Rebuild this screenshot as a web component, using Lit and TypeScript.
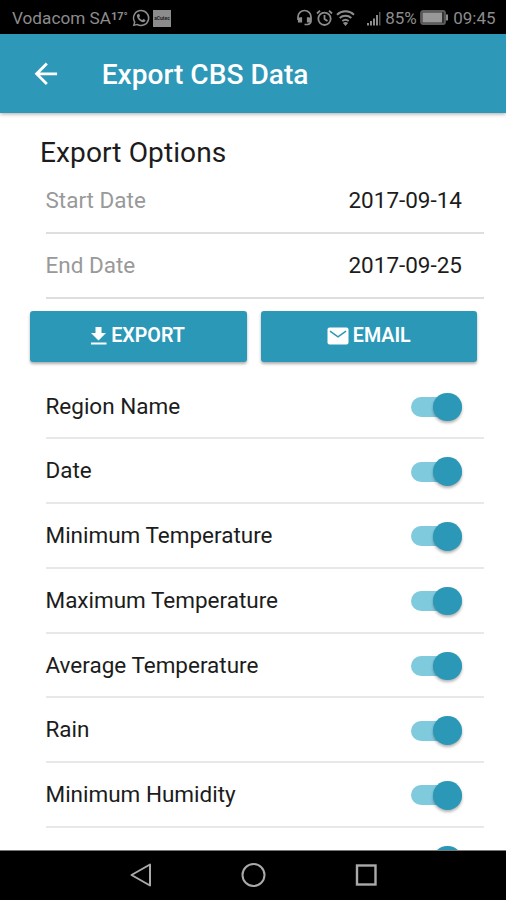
import { LitElement, html, css } from "lit";
import { customElement, property } from "lit/decorators.js";

@customElement("option-toggle")
class OptionToggle extends LitElement {
  @property() label = "";

  static styles = css`
    :host {
      display: flex;
      box-sizing: border-box;
      height: 64.75px;
      margin-left: 45.5px;
      margin-right: 22px;
      padding-right: 22.5px;
      align-items: center;
      justify-content: space-between;
      border-bottom: 2px solid #e8e8e8;
      flex: none;
    }
    .label { line-height: 30px; margin-top: -0.4px; }
    .track {
      width: 51px;
      height: 20px;
      border-radius: 10px;
      background: #80cade;
      display: flex;
      align-items: center;
      justify-content: flex-end;
      margin-top: 2px;
    }
    .knob {
      width: 28.4px;
      height: 28.4px;
      flex: none;
      border-radius: 50%;
      background: #2b98b7;
      box-shadow: 0 2px 3px rgba(0, 0, 0, 0.3);
    }
  `;

  render() {
    return html`<span class="label">${this.label}</span>
      <span class="track"><span class="knob"></span></span>`;
  }
}

@customElement("app-root")
class AppRoot extends LitElement {
  static styles = css`
    :host {
      display: flex;
      flex-direction: column;
      height: 900px;
      overflow: hidden;
      background: #fff;
      color: #1c1c1c;
      font-family: Roboto, "Noto Sans", sans-serif;
      font-size: 22.49px;
    }
    svg { display: block; flex: none; }
    .status {
      height: 34px;
      flex: none;
      box-sizing: border-box;
      background: #000;
      color: #8c8c8c;
      display: flex;
      align-items: center;
      padding: 2px 10.5px 0 12px;
      font-size: 17px;
      line-height: 20px;
      white-space: nowrap;
    }
    .carrier { width: 99px; font-size: 17.2px; }
    .temp { width: 21px; font-size: 11px; font-weight: 700; margin-top: -3px; }
    .badge {
      width: 18px;
      height: 17px;
      margin-left: 3px;
      background: #8c8c8c;
      color: #222;
      font-size: 5px;
      line-height: 17px;
      font-weight: 700;
      text-align: center;
      overflow: hidden;
    }
    .spacer { flex: 1; }
    .alarm { margin-left: 3px; }
    .wifi { margin-left: 3px; }
    .signal { margin-left: 12px; }
    .percent { width: 35px; margin-left: 1px; margin-top: -1px; }
    .clock { margin-left: 4px; }
    .header {
      height: 79px;
      flex: none;
      background: #2d98b7;
      color: #fff;
      display: flex;
      align-items: center;
      padding-left: 28.5px;
      box-shadow: 0 1px 4px rgba(0, 0, 0, 0.35);
      position: relative;
      z-index: 1;
    }
    .title { font-size: 28.1px; font-weight: 500; margin-left: 39.5px; line-height: 36px; padding-top: 2px; }
    .content { height: 737px; flex: none; overflow: hidden; }
    .heading {
      height: 56.5px;
      box-sizing: border-box;
      padding: 23px 0 0 40px;
      font-size: 28.1px;
      letter-spacing: 0.08px;
      line-height: 34px;
    }
    .date {
      height: 64.75px;
      box-sizing: border-box;
      margin: 0 22px 0 45.5px;
      padding: 0 22px 1px 0;
      display: flex;
      align-items: center;
      justify-content: space-between;
      border-bottom: 2px solid #dedede;
    }
    .name { color: #999; }
    .buttons {
      display: grid;
      grid-template-columns: 1fr 1fr;
      gap: 14px;
      padding: 12px 29px 12.5px 30px;
    }
    .button {
      height: 51px;
      border-radius: 3px;
      background: #2b98b7;
      color: #fff;
      display: flex;
      align-items: center;
      justify-content: center;
      gap: 4px;
      font-size: 19.68px;
      font-weight: 600;
      line-height: 24px;
      box-shadow: 0 2px 3px rgba(0, 0, 0, 0.32);
    }
    .button svg { margin-top: -2px; }
    .button span { margin-top: -1px; }
    .button.export { padding-right: 1.5px; box-sizing: border-box; }
    .nav {
      height: 50px;
      flex: none;
      box-sizing: border-box;
      background: #000;
      display: grid;
      grid-template-columns: 26px 26px 26px;
      column-gap: 86.5px;
      justify-content: center;
      align-items: center;
      border-top: 1px solid #777;
      padding-bottom: 1px;
    }
  `;

  options = [
    "Region Name",
    "Date",
    "Minimum Temperature",
    "Maximum Temperature",
    "Average Temperature",
    "Rain",
    "Minimum Humidity",
    "",
  ];

  statusBar() {
    return html`<div class="status">
      <span class="carrier">Vodacom SA</span>
      <span class="temp">17°</span>
      <svg width="18" height="18" viewBox="0 0 24 24" fill="#8c8c8c">
        <path d="M12 1A11 11 0 0 0 2.500 17.500L1 23l5.700-1.500A11 11 0 1 0 12 1zm0 2a9 9 0 1 1-4.900 16.500l-3.300.9.9-3.200A9 9 0 0 1 12 3z" fill-rule="evenodd" />
        <path d="M8.500 6.500C7.500 6.500 6.500 7.600 6.500 9c0 3.500 4.500 8.500 8.500 8.500 1.700 0 3-1.200 3-2.600 0-.5-2.300-1.700-2.800-1.700-.6 0-1.100 1.400-1.700 1.400-.9 0-3.900-2.800-3.900-3.700 0-.5 1-1 1-1.600 0-.6-.9-2.800-1.400-2.800z" />
      </svg>
      <span class="badge">aCutec</span>
      <span class="spacer"></span>
      <svg width="17" height="18" viewBox="0 0 17 18" fill="none" stroke="#8c8c8c">
        <path d="M2 11V8a6.500 6.500 0 0 1 13 0v4a3.500 3.500 0 0 1-3.500 3.500H8.500" stroke-width="1.700" />
        <path d="M3 8.500v5M5 8.200v5.400M12 8.200v5.400M14 8.500v5" stroke-width="2.200" />
      </svg>
      <svg class="alarm" width="17" height="18" viewBox="0 0 17 18" fill="none" stroke="#8c8c8c" stroke-width="1.800">
        <circle cx="8.500" cy="9.800" r="6.200" />
        <path d="M8.500 6v4l3 2M1 4.500l3-2.800M16 4.500l-3-2.800" />
      </svg>
      <svg class="wifi" width="19" height="18" viewBox="0 0 19 18" fill="none" stroke="#8c8c8c" stroke-width="2">
        <path d="M1 5.700a12.500 12.500 0 0 1 17 0M3.700 8.900a8.700 8.700 0 0 1 11.600 0M6.300 12a5 5 0 0 1 6.400 0" />
        <path d="M9.500 17l-2.600-2.900a3.800 3.800 0 0 1 5.200 0z" fill="#8c8c8c" stroke="none" />
      </svg>
      <svg class="signal" width="17" height="18" viewBox="0 0 17 18" fill="#8c8c8c">
        <path d="M0 14h2v2.500H0zM3 12h2v4.500H3zM6 9.500h2v7H6zM9 6h2v10.500H9z" />
        <path d="M12 3h1.500v13.500H12z" opacity=".6" />
      </svg>
      <span class="percent">85%</span>
      <svg width="29" height="16" viewBox="0 0 29 16">
        <rect x="1" y="1" width="24" height="13" rx="2" fill="#333" stroke="#5c5c5c" stroke-width="1.800" />
        <rect x="2.500" y="2.500" width="19.500" height="10" fill="#989898" />
        <path d="M26 4.500h2v6h-2z" fill="#8c8c8c" />
      </svg>
      <span class="clock">09:45</span>
    </div>`;
  }

  render() {
    return html`
      ${this.statusBar()}
      <div class="header">
        <svg width="33.700" height="33.700" viewBox="0 0 24 24" fill="#fff">
          <path d="M20 11H7.830l5.590-5.590L12 4l-8 8 8 8 1.410-1.410L7.830 13H20v-2z" />
        </svg>
        <span class="title">Export CBS Data</span>
      </div>
      <div class="content">
        <div class="heading">Export Options</div>
        <div class="date"><span class="name">Start Date</span><span>2017-09-14</span></div>
        <div class="date"><span class="name">End Date</span><span>2017-09-25</span></div>
        <div class="buttons">
          <div class="button export">
            <svg width="17" height="20" viewBox="0 0 17 20" fill="#fff">
              <path d="M5.500 1h6v6H16l-7.500 7.500L1 7h4.500zM1 16.500h15.500v2H1z" />
            </svg>
            <span>EXPORT</span>
          </div>
          <div class="button">
            <svg width="22" height="18" viewBox="0 0 22 18">
              <rect x=".5" y=".5" width="21" height="17" rx="2" fill="#fff" />
              <path d="M3 4.200l8 5.600 8-5.600" fill="none" stroke="#2b98b7" stroke-width="1.500" />
            </svg>
            <span>EMAIL</span>
          </div>
        </div>
        ${this.options.map((o) => html`<option-toggle .label=${o}></option-toggle>`)}
      </div>
      <div class="nav">
        <svg width="26" height="26" viewBox="0 0 26 26" fill="none" stroke="#aaa" stroke-width="2" stroke-linejoin="round">
          <path d="M22 2.500v21L3.500 13z" />
        </svg>
        <svg width="26" height="26" viewBox="0 0 26 26" fill="none" stroke="#aaa" stroke-width="2">
          <circle cx="13.500" cy="13" r="11" />
        </svg>
        <svg width="26" height="26" viewBox="0 0 26 26" fill="none" stroke="#aaa" stroke-width="2.400">
          <rect x="4" y="3.500" width="18.500" height="19" />
        </svg>
      </div>
    `;
  }
}
